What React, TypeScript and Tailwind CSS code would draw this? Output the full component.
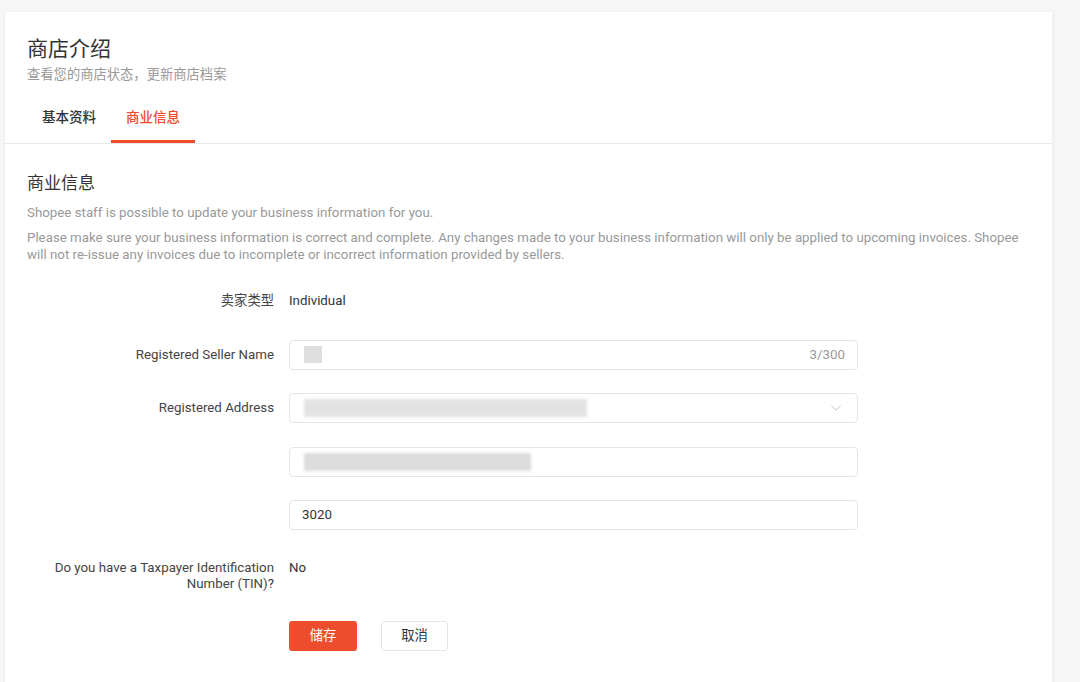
import { ChevronDown } from "lucide-react";

const font = { fontFamily: 'Roboto, "Noto Sans CJK SC", sans-serif' };

function Blur({ w, dark = false }: { w: number; dark?: boolean }) {
  // 打码区域：模糊的灰色块
  return (
    <div
      className={`h-[18px] blur-[1.5px] ${dark ? "bg-[#dcdcdc]" : "bg-[#e3e3e3]"}`}
      style={{ width: w }}
    />
  );
}

function Row({ label, children, top = false }: { label: React.ReactNode; children: React.ReactNode; top?: boolean }) {
  return (
    <div className={`flex mb-[23.5px] ${top ? "items-start" : "items-center min-h-[30px]"}`}>
      <div className={`w-[247px] shrink-0 text-right text-[13.3px] text-[#444] ${top ? "pt-[6px] leading-[16px]" : ""}`}>
        {label}
      </div>
      <div className={`ml-[15px] flex-1 text-[13.3px] text-[#333] ${top ? "pt-[6px] leading-[16px]" : ""}`}>{children}</div>
    </div>
  );
}

export default function App() {
  return (
    <div className="min-h-[682px] bg-[#f6f6f6] pt-[12px] pl-[5px] pr-[28px] overflow-hidden" style={font}>
      <div className="bg-white shadow-[0_1px_3px_rgba(0,0,0,0.08)] min-h-[680px]">
        <div className="border-b border-[#e8e8e8] px-[22px] pt-[24px]">
          <div className="text-[21px] leading-[26px] text-[#333]">商店介绍</div>
          <div className="text-[13.3px] leading-[17px] text-[#999] mt-[4px]">查看您的商店状态，更新商店档案</div>
          <div className="flex mt-[15px]">
            <div className="px-[15px] pt-[10px] pb-[14px] text-[13.5px] leading-[18px] font-medium text-[#333] border-b-[3px] border-transparent">
              基本资料
            </div>
            <div className="px-[15px] pt-[10px] pb-[14px] text-[13.5px] leading-[18px] font-medium text-[#ee4d2d] border-b-[3px] border-[#ee4d2d]">
              商业信息
            </div>
          </div>
        </div>

        <div className="px-[22px] pt-[28px]">
          <div className="text-[17px] leading-[22px] text-[#333]">商业信息</div>
          <p className="mt-[10px] text-[13.3px] leading-[17px] text-[#999]">
            Shopee staff is possible to update your business information for you.
          </p>
          <p className="mt-[8px] text-[13.3px] leading-[17px] text-[#999] pr-[10px]">
            Please make sure your business information is correct and complete. Any changes made to your business information will only be applied to upcoming invoices. Shopee will not re-issue any invoices due to incomplete or incorrect information provided by sellers.
          </p>

          <div className="mt-[23px]">
            <Row label="卖家类型">Individual</Row>
            <Row label="Registered Seller Name">
              <div className="w-[569px] h-[30px] rounded-[4px] border border-[#e5e5e5] flex items-center pl-[14px] pr-[12px]">
                <div className="w-[18px] h-[17px] bg-[#dedede] blur-[0.5px]" />
                <span className="ml-auto text-[13.3px] text-[#999]">3/300</span>
              </div>
            </Row>
            <Row label="Registered Address">
              <div className="w-[569px] h-[30px] rounded-[4px] border border-[#e5e5e5] flex items-center pl-[14px] pr-[12px]">
                <Blur w={283} />
                <ChevronDown className="ml-auto w-[18px] h-[18px] text-[#bbb]" strokeWidth={1.1} />
              </div>
            </Row>
            <Row label="">
              <div className="w-[569px] h-[30px] rounded-[4px] border border-[#e5e5e5] flex items-center pl-[14px] pr-[12px]">
                <Blur w={227} dark />
              </div>
            </Row>
            <Row label="">
              <div className="w-[569px] h-[30px] rounded-[4px] border border-[#e5e5e5] flex items-center px-[12px] text-[13.3px] text-[#333]">
                3020
              </div>
            </Row>
            <Row label="Do you have a Taxpayer Identification Number (TIN)?" top>
              No
            </Row>
            <div className="flex ml-[262px] mt-[29px] gap-[24px]">
              <button className="w-[68px] h-[30px] rounded-[3px] bg-[#ee4d2d] text-white text-[13.3px]">储存</button>
              <button className="w-[67px] h-[30px] rounded-[3px] border border-[#e5e5e5] bg-white text-[#333] text-[13.3px]">取消</button>
            </div>
          </div>
        </div>
      </div>
    </div>
  );
}
